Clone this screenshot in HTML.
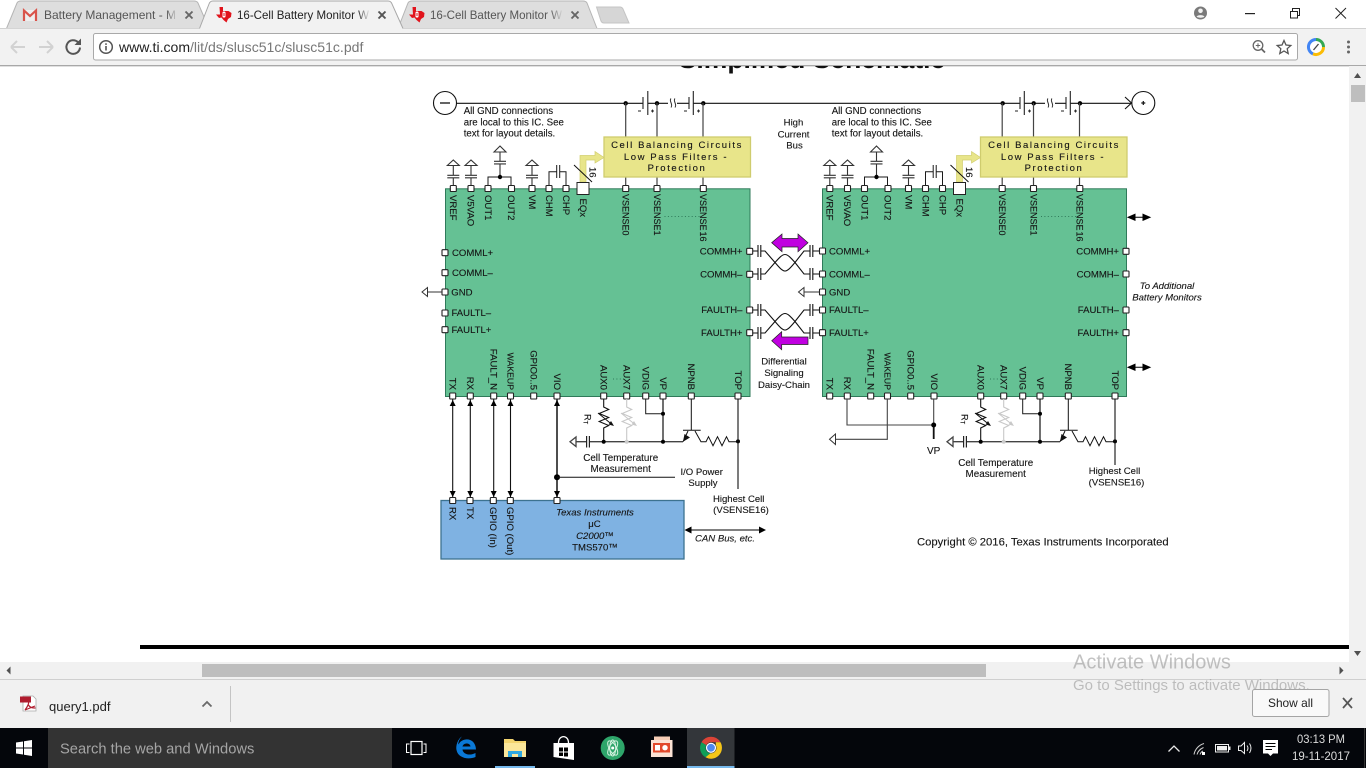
<!DOCTYPE html>
<html lang="en"><head><meta charset="utf-8"><title>16-Cell Battery Monitor</title>
<style>
html,body{margin:0;padding:0;width:1366px;height:768px;overflow:hidden;background:#fff}
svg{display:block;font-family:"Liberation Sans",Arial,sans-serif}
.d text{font-size:9.55px;fill:#151515;stroke:#151515;stroke-width:.12}
.d text.n{font-size:9.7px}
.d text.t{font-size:9.9px}
.d text.v{font-size:9px}
.d text.w{font-size:8.7px}
.s{fill:none;stroke:#1a1a1a;stroke-width:1}
.d text.y{font-size:9.5px;letter-spacing:1.6px;text-anchor:middle}
.m{text-anchor:middle}
.e{text-anchor:end}
</style></head><body>
<svg width="1366" height="768" viewBox="0 0 1366 768" xmlns="http://www.w3.org/2000/svg">
<defs>
<linearGradient id="fa" x1="0" x2="1" y1="0" y2="0"><stop offset="0" stop-color="#dedede" stop-opacity="0"/><stop offset="1" stop-color="#dedede"/></linearGradient>
<linearGradient id="fb" x1="0" x2="1" y1="0" y2="0"><stop offset="0" stop-color="#f2f2f2" stop-opacity="0"/><stop offset="1" stop-color="#f2f2f2"/></linearGradient>
<rect id="p" x="-3" y="-3" width="6" height="6" rx=".8" fill="#fff" stroke="#222" stroke-width="1.1"/>
<circle id="dot" r="2.2" fill="#000"/>
<path id="gnd" d="M-6 165.500L0 160L6 165.500ZM0 165.500V175M-6 175.300H6M-6 177.800H6M0 178V188" fill="#fff" stroke="#333" stroke-width="1.100"/>
<path id="tu" d="M0 0l-3 6h6z" fill="#000"/>
<path id="td" d="M0 0l-3 -6h6z" fill="#000"/>
<path id="da" d="M0 0l7 -3v6zM22 0l-7 -3v6zM6 0H16" fill="#000" stroke="#000" stroke-width="1"/>
<g id="top">
 <use href="#gnd" x="453.300"/><use href="#gnd" x="471"/><use href="#gnd" x="532"/>
 <path d="M494 152L500 146L506 152ZM500 152V161M494 161.300H506M494 163.900H506M500 164V177" fill="#fff" stroke="#333" stroke-width="1.100"/>
 <path d="M488 188V177H511V188" class="s"/><use href="#dot" x="500" y="177"/>
 <path d="M549 188V171.700H556.500M559.700 171.700H566V188M556.700 165V178M559.700 165V178" class="s"/>
 <path d="M580 182V155.500H595V151.500L604 157.500L595 163V160H586V182Z" fill="#e8e58a" stroke="#d2cf70" stroke-width=".7"/>
 <path d="M574 165L592 182" stroke="#111" stroke-width="1"/>
 <rect x="577" y="182.500" width="12" height="12" fill="#fff" stroke="#222"/>
 <path d="M625.700 103V137M625.700 177V188M657 103V137M657 177V188M703 103V137M703 177V188" stroke="#444" stroke-width="1.200"/>
 <rect x="604" y="137" width="146.500" height="40" fill="#e8e58a" stroke="#cfcc6e" stroke-width="1.300"/>
 <use href="#p" x="453.300" y="188.500"/><use href="#p" x="471" y="188.500"/><use href="#p" x="488" y="188.500"/><use href="#p" x="511.500" y="188.500"/><use href="#p" x="532" y="188.500"/><use href="#p" x="549" y="188.500"/><use href="#p" x="566" y="188.500"/><use href="#p" x="625.700" y="188.500"/><use href="#p" x="657" y="188.500"/><use href="#p" x="703.300" y="188.500"/>
 <path d="M664.500 216.500H700" stroke="#2f7a5a" stroke-dasharray="1 2.400"/>
</g>
<g id="bot">
 <use href="#p" x="452.700" y="396"/><use href="#p" x="470.300" y="396"/><use href="#p" x="493.700" y="396"/><use href="#p" x="510.500" y="396"/><use href="#p" x="533.700" y="396"/><use href="#p" x="557" y="396"/><use href="#p" x="603.700" y="396"/><use href="#p" x="626.700" y="396"/><use href="#p" x="645.700" y="396"/><use href="#p" x="663" y="396"/><use href="#p" x="691.300" y="396"/><use href="#p" x="738" y="396"/>
 <path d="M613 379H624" stroke="#2f7a5a" stroke-dasharray="1 2.400"/>
</g>
<g id="temp">
 <path d="M570 441.700L576 437V446.500ZM576 441.700H586.500M589.500 441.700H683" fill="#fff" stroke="#444" stroke-width="1.300"/>
 <path d="M586.600 436V447.500M589.400 436V447.500" stroke="#222" stroke-width="1.200"/>
 <path d="M603.700 399V407l5 2.500-9.500 4 9.500 4-9.500 4 9.500 4-5 2.500V441.700" fill="none" stroke="#111" stroke-width="1.100"/>
 <path d="M598 413L612 424.500" stroke="#111"/><path d="M614 426L608.500 424.500L611 421Z" fill="#111"/>
 <path d="M626.700 399V407l5 2.500-9.500 4 9.500 4-9.500 4 9.500 4-5 2.500V441.700" fill="none" stroke="#c8c8c8" stroke-width="1.100"/>
 <path d="M621 413L635 424.500" stroke="#c8c8c8"/><path d="M637 426L631.500 424.500L634 421Z" fill="#c8c8c8"/>
 <path d="M645.700 399V413.700H663" class="s"/>
 <path d="M663 399V441.700" stroke="#111" stroke-width="1.200"/>
 <circle cx="663" cy="413.700" r="2" fill="#000"/>
 <circle cx="603.700" cy="441.700" r="2" fill="#000"/><circle cx="626.700" cy="441.700" r="2" fill="#ccc"/><circle cx="663" cy="441.700" r="2" fill="#000"/>
 <path d="M691.300 399V430.300M683 430.300H700.700" stroke="#111" stroke-width="1"/>
 <path d="M688 431L683 441.700M695 431L701 441.700H706l2.500-5 4.500 9 4.500-9 4.500 9 4.500-9 2.500 5H738" fill="none" stroke="#111"/>
 <path d="M683 441.700L690 437.500L684.500 434Z" fill="#111"/>
 <circle cx="738" cy="441.400" r="2" fill="#000"/>
</g>
<g id="diff">
 <path d="M753 0H758M758 -6V6M760.800 -6V6M760.800 0H765L775 11.500C779 16 782 20 785 20C788 20 791 16 795 11.500L804 0H810M810 -6V6M812.800 -6V6M812.800 0H819.500" fill="none" stroke="#111" stroke-width="1.100"/>
 <path d="M753 23H758M758 17V29M760.800 17V29M760.800 23H765L775 11.500C779 7 782 3.500 785 3.500C788 3.500 791 7 795 11.500L804 23H810M810 17V29M812.800 17V29M812.800 23H819.500" fill="none" stroke="#111" stroke-width="1.100"/>
</g>
</defs>

<rect width="1366" height="768" fill="#fff"/>
<text x="812" y="68" text-anchor="middle" font-size="26.500" font-weight="700" fill="#111">Simplified Schematic</text>

<g class="d">
<!-- bus -->
<path d="M456.500 103.300H643M648 103.300H668M677 103.300H689M693.500 103.300H1020M1024.500 103.300H1045M1055 103.300H1066M1070.500 103.300H1131" stroke="#111" stroke-width="1.200"/>
<circle cx="445" cy="103" r="11.500" fill="#fff" stroke="#111" stroke-width="1.100"/><path d="M440 103H450" stroke="#111" stroke-width="1.300"/>
<circle cx="1143.300" cy="103" r="11.500" fill="#fff" stroke="#111" stroke-width="1.100"/><path d="M1141.300 103H1145.300M1143.300 101V105" stroke="#111" stroke-width="1.200"/>
<path d="M1125 97L1131.500 103L1125 109" fill="none" stroke="#111" stroke-width="1.100"/>
<path d="M643 97V109M647.800 91V115M689 97V109M693.300 91V115M1020 97V109M1024.300 91V115M1066 97V109M1070.300 91V115" stroke="#222" stroke-width="1.100"/>
<path d="M671 98.500c-2.500 2.500 2.500 5.500 0 9M675 98.500c-2.500 2.500 2.500 5.500 0 9M1048 98.500c-2.500 2.500 2.500 5.500 0 9M1052 98.500c-2.500 2.500 2.500 5.500 0 9" fill="none" stroke="#333" stroke-width="1"/>
<path d="M638 111h3M651 111h3M652.500 109.500v3M684 111h3M697 111h3M698.500 109.500v3M1015 111h3M1028 111h3M1029.500 109.500v3M1061 111h3M1074 111h3M1075.500 109.500v3" stroke="#222" stroke-width=".9"/>
<use href="#dot" x="625.700" y="103.300"/><use href="#dot" x="657" y="103.300"/><use href="#dot" x="703.300" y="103.300"/>
<use href="#dot" x="1002.700" y="103.300"/><use href="#dot" x="1033.700" y="103.300"/><use href="#dot" x="1080" y="103.300"/>

<!-- chips -->
<rect x="445.500" y="188.800" width="304.500" height="207.700" fill="#65c194" stroke="#2f7a5a" stroke-width="1"/>
<rect x="822.500" y="188.800" width="304" height="207.700" fill="#65c194" stroke="#2f7a5a" stroke-width="1"/>

<use href="#top"/><use href="#top" x="376.500"/>
<use href="#bot"/><use href="#bot" x="377"/>
<use href="#temp"/><use href="#temp" x="377"/>

<!-- side pins -->
<use href="#p" x="445" y="252.700"/><use href="#p" x="445" y="272.700"/><use href="#p" x="445" y="292"/><use href="#p" x="445" y="313"/><use href="#p" x="445" y="329.700"/>
<use href="#p" x="749.700" y="251.300"/><use href="#p" x="749.700" y="274.300"/><use href="#p" x="749.700" y="310"/><use href="#p" x="749.700" y="332.700"/>
<use href="#p" x="822.500" y="251"/><use href="#p" x="822.500" y="274"/><use href="#p" x="822.500" y="292"/><use href="#p" x="822.500" y="310"/><use href="#p" x="822.500" y="332.700"/>
<use href="#p" x="1126" y="251.300"/><use href="#p" x="1126" y="274"/><use href="#p" x="1126" y="310"/><use href="#p" x="1126" y="332.700"/>
<path d="M422 292L427.500 287.500V296.500ZM427.500 292H442" fill="#fff" stroke="#333"/>
<path d="M798.500 292L804 287.500V296.500ZM804 292H819.500" fill="#fff" stroke="#333"/>
<use href="#diff" y="251"/><use href="#diff" y="310"/>
<use href="#da" x="1128" y="217.300"/><use href="#da" x="1128" y="367.300"/>

<!-- magenta arrows -->
<path d="M771.700 242.700L782 234V238.500H798V234L808 242.700L798 251.700V247H782V251.700Z" fill="#c000e0" stroke="#222" stroke-width=".7"/>
<path d="M771.700 340.700L781.700 331.700V337H808V344.500H781.700V349.700Z" fill="#c000e0" stroke="#222" stroke-width=".7"/>

<!-- left chip bottom connections -->
<path d="M452.700 399V497M470.300 399V497M493.700 399V497M510.500 399V497" stroke="#111" stroke-width="1.100"/>
<path d="M557 399V497" stroke="#222" stroke-width="1.600"/>
<use href="#tu" x="452.700" y="400"/><use href="#tu" x="470.300" y="400"/><use href="#tu" x="493.700" y="400"/><use href="#tu" x="510.500" y="400"/><use href="#tu" x="557" y="400"/>
<use href="#td" x="452.700" y="497"/><use href="#td" x="470.300" y="497"/><use href="#td" x="493.700" y="497"/><use href="#td" x="510.500" y="497"/><use href="#td" x="557" y="497"/>
<circle cx="557" cy="477.300" r="3" fill="#000"/><path d="M557 477.300H675" stroke="#111"/>
<path d="M738 399V489" stroke="#111" stroke-width="1.100"/>

<!-- MCU -->
<rect x="441" y="500.500" width="243" height="58.500" fill="#7fb2e2" stroke="#3c7290" stroke-width="1.300"/>
<use href="#p" x="452.700" y="500.500"/><use href="#p" x="470" y="500.500"/><use href="#p" x="493.300" y="500.500"/><use href="#p" x="510.300" y="500.500"/><use href="#p" x="557" y="500.500"/>
<path d="M690 530H760" stroke="#000"/><path d="M684.500 530l7-3.500v7zM766 530l-7-3.500v7z" fill="#000"/>

<!-- right chip bottom connections -->
<path d="M847 399V425H933.700M887.300 399V439.300H835M933.700 399V425" fill="none" stroke="#444" stroke-width="1.100"/>
<path d="M933.700 425V439" stroke="#111" stroke-width="1.800"/>
<circle cx="933.700" cy="425" r="2.500" fill="#000"/>
<path d="M829.500 439.300L835.500 434V444.500Z" fill="#fff" stroke="#333"/>
<path d="M1115 399V465" stroke="#111" stroke-width="1.100"/>

<!-- text : notes -->
<text class="n" x="463.700" y="114">All GND connections</text><text class="n" x="463.700" y="125.700">are local to this IC. See</text><text class="n" x="463.700" y="136.700">text for layout details.</text>
<text class="n" x="831.700" y="114">All GND connections</text><text class="n" x="831.700" y="125.700">are local to this IC. See</text><text class="n" x="831.700" y="136.700">text for layout details.</text>
<text class="m" x="793.500" y="125.700">High</text><text class="m" x="793.500" y="137.700">Current</text><text class="m" x="794.500" y="148.300">Bus</text>
<text class="y" x="677" y="148">Cell Balancing Circuits</text><text class="y" x="676" y="160">Low Pass Filters -</text><text class="y" x="677" y="171">Protection</text>
<text class="y" x="1054" y="148">Cell Balancing Circuits</text><text class="y" x="1053" y="160">Low Pass Filters -</text><text class="y" x="1054" y="171">Protection</text>
<text transform="translate(589.500,167) rotate(90)">16</text><text transform="translate(966,167) rotate(90)">16</text>

<!-- top labels left -->
<text transform="translate(450,195) rotate(90)">VREF</text>
<text transform="translate(467.500,195) rotate(90)">V5VAO</text>
<text transform="translate(485,195) rotate(90)">OUT1</text>
<text transform="translate(508,195) rotate(90)">OUT2</text>
<text transform="translate(528.800,195) rotate(90)">VM</text>
<text transform="translate(546,195) rotate(90)">CHM</text>
<text transform="translate(563,195) rotate(90)">CHP</text>
<text transform="translate(580,198.500) rotate(90)">EQx</text>
<text class="v" transform="translate(622.700,194) rotate(90)">VSENSE0</text>
<text class="v" transform="translate(654,194) rotate(90)">VSENSE1</text>
<text class="v" word-spacing="-1.500" transform="translate(700,194) rotate(90)">VSENSE 16</text>
<!-- top labels right -->
<text transform="translate(826.500,195) rotate(90)">VREF</text>
<text transform="translate(844,195) rotate(90)">V5VAO</text>
<text transform="translate(861.500,195) rotate(90)">OUT1</text>
<text transform="translate(884.500,195) rotate(90)">OUT2</text>
<text transform="translate(905.300,195) rotate(90)">VM</text>
<text transform="translate(922.500,195) rotate(90)">CHM</text>
<text transform="translate(939.500,195) rotate(90)">CHP</text>
<text transform="translate(956.500,198.500) rotate(90)">EQx</text>
<text class="v" transform="translate(999.200,194) rotate(90)">VSENSE0</text>
<text class="v" transform="translate(1030.500,194) rotate(90)">VSENSE1</text>
<text class="v" word-spacing="-1.500" transform="translate(1076.500,194) rotate(90)">VSENSE 16</text>

<!-- side labels -->
<text x="452" y="256">COMML+</text><text x="452" y="276">COMML–</text><text x="451.300" y="295.500">GND</text><text x="451.500" y="316">FAULTL–</text><text x="451.500" y="333">FAULTL+</text>
<text class="e" x="742.500" y="254.500">COMMH+</text><text class="e" x="742.500" y="277.500">COMMH–</text><text class="e" x="742.500" y="313">FAULTH–</text><text class="e" x="742.500" y="336">FAULTH+</text>
<text x="829" y="254.500">COMML+</text><text x="829" y="277.500">COMML–</text><text x="829" y="295.500">GND</text><text x="829" y="313">FAULTL–</text><text x="829" y="336">FAULTL+</text>
<text class="e" x="1119" y="254.500">COMMH+</text><text class="e" x="1119" y="277.500">COMMH–</text><text class="e" x="1119" y="313">FAULTH–</text><text class="e" x="1119" y="336">FAULTH+</text>

<!-- bottom labels left -->
<text class="e" transform="translate(449.500,390) rotate(90)">TX</text>
<text class="e" transform="translate(467,390) rotate(90)">RX</text>
<text class="e" transform="translate(490.500,390) rotate(90)">FAULT_N</text>
<text class="e w" transform="translate(507.300,390) rotate(90)">WAKEUP</text>
<text class="e" transform="translate(530.500,390) rotate(90)">GPIO0..5</text>
<text class="e" transform="translate(553.800,390) rotate(90)">VIO</text>
<text class="e" transform="translate(600.500,390) rotate(90)">AUX0</text>
<text class="e" transform="translate(623.500,390) rotate(90)">AUX7</text>
<text class="e" transform="translate(642.500,390) rotate(90)">VDIG</text>
<text class="e" transform="translate(659.800,390) rotate(90)">VP</text>
<text class="e" transform="translate(688,390) rotate(90)">NPNB</text>
<text class="e" transform="translate(734.800,390) rotate(90)">TOP</text>
<!-- bottom labels right -->
<text class="e" transform="translate(826.500,390) rotate(90)">TX</text>
<text class="e" transform="translate(844,390) rotate(90)">RX</text>
<text class="e" transform="translate(867.500,390) rotate(90)">FAULT_N</text>
<text class="e w" transform="translate(884.300,390) rotate(90)">WAKEUP</text>
<text class="e" transform="translate(907.500,390) rotate(90)">GPIO0..5</text>
<text class="e" transform="translate(930.800,390) rotate(90)">VIO</text>
<text class="e" transform="translate(977.500,390) rotate(90)">AUX0</text>
<text class="e" transform="translate(1000.500,390) rotate(90)">AUX7</text>
<text class="e" transform="translate(1019.500,390) rotate(90)">VDIG</text>
<text class="e" transform="translate(1036.800,390) rotate(90)">VP</text>
<text class="e" transform="translate(1065,390) rotate(90)">NPNB</text>
<text class="e" transform="translate(1111.800,390) rotate(90)">TOP</text>

<!-- misc labels -->
<text class="m" x="784" y="364.500">Differential</text><text class="m" x="784" y="376">Signaling</text><text class="m" x="784" y="388">Daisy-Chain</text>
<text class="m" x="1167" y="289" font-style="italic">To Additional</text><text class="m" x="1167" y="300.500" font-style="italic">Battery Monitors</text>
<text transform="translate(584.500,414) rotate(90)" style="font-size:9px">R<tspan font-size="6" dy="1">T</tspan></text>
<text transform="translate(961.500,414) rotate(90)" style="font-size:9px">R<tspan font-size="6" dy="1">T</tspan></text>
<text class="m t" x="620.700" y="461">Cell Temperature</text><text class="m t" x="620.700" y="472">Measurement</text>
<text class="m t" x="995.700" y="466">Cell Temperature</text><text class="m t" x="995.700" y="477">Measurement</text>
<text class="m" x="701.700" y="475">I/O Power</text><text class="m" x="703" y="486">Supply</text>
<text class="m" x="738.700" y="502">Highest Cell</text><text class="m" x="741" y="513">(VSENSE16)</text>
<text class="m" x="1114.500" y="474">Highest Cell</text><text class="m" x="1116.500" y="485.500">(VSENSE16)</text>
<text class="m" x="933.700" y="454" style="font-size:10px">VP</text>
<text transform="translate(449.500,507) rotate(90)">RX</text><text transform="translate(466.800,507) rotate(90)">TX</text>
<text transform="translate(490,507) rotate(90)">GPIO (In)</text><text transform="translate(507,507) rotate(90)">GPIO (Out)</text>
<text class="m" x="595" y="515.500" font-style="italic">Texas Instruments</text>
<text class="m" x="594.500" y="527">μC</text><text class="m" x="595" y="539" font-style="italic">C2000™</text><text class="m" x="595" y="550.500">TMS570™</text>
<text class="m" x="725" y="541.700" font-style="italic">CAN Bus, etc.</text>
<text x="917" y="545.500" style="font-size:11.270px">Copyright © 2016, Texas Instruments Incorporated</text>
</g>

<rect x="140" y="645" width="1209" height="4" fill="#000"/>

<!-- vertical scrollbar -->
<rect x="1349" y="66" width="17" height="596" fill="#f1f1f1"/>
<path d="M1354 78L1357.500 73L1361 78Z" fill="#505050"/>
<rect x="1351" y="85" width="14" height="17" fill="#bebebe"/>
<path d="M1354 651L1357.500 656L1361 651Z" fill="#505050"/>
<!-- horizontal scrollbar -->
<rect x="0" y="662" width="1366" height="17" fill="#f1f1f1"/>
<rect x="202" y="664" width="784" height="13" fill="#bebebe"/>
<path d="M10.500 666.500L6.500 670.500L10.500 674.500Z" fill="#505050"/>
<path d="M1339.500 666.500L1343.500 670.500L1339.500 674.500Z" fill="#505050"/>
<rect x="0" y="679" width="1366" height="1" fill="#cfcfcf"/>
<!-- download bar -->
<rect x="0" y="680" width="1366" height="48" fill="#f1f1f1"/>
<path d="M23 696H33L36 699V711H23Z" fill="#fff" stroke="#aaa" stroke-width=".8"/>
<rect x="20" y="696.500" width="11" height="6" fill="#b01c2e"/>
<path d="M25 710C28 706 29 703 28.500 702M28.500 705C30 708 33 708 35.500 708M25 710L35 706" fill="none" stroke="#b01c2e" stroke-width="1.200"/>
<text x="49" y="711" font-size="13" fill="#222">query1.pdf</text>
<path d="M202.500 706.500L207 702L211.500 706.500" fill="none" stroke="#6a6a6a" stroke-width="1.800"/>
<rect x="230" y="686" width="1" height="36" fill="#c4c4c4"/>
<path d="M1343 698L1352 708M1352 698L1343 708" stroke="#555" stroke-width="1.700"/>

<!-- browser chrome -->
<rect x="0" y="0" width="1366" height="29" fill="#fff"/>
<rect x="0" y="28" width="1366" height="38" fill="#f2f2f2"/>
<path d="M0 28.500H1366" stroke="#b0b0b0"/>
<path d="M0 65.500H1366" stroke="#a8a8a8"/>
<rect x="0" y="66" width="1349" height="1" fill="#000" opacity=".12"/>
<path d="M6.500 28.500L17 3Q18 1 21 1H194Q197 1 198 3L209 28.500Z" fill="#dedede" stroke="#b5b5b5"/>
<path d="M398 28.500L408 3Q409 1 412 1H583Q586 1 587 3L597 28.500Z" fill="#dedede" stroke="#b5b5b5"/>
<path d="M596.500 7H620Q622 7 623 9L629 23H604Q602 23 601 21Z" fill="#d6d6d6" stroke="#c4c4c4"/>
<path d="M0 28.500H199.500L209 4Q210 1 213 1H388Q391 1 392 4L403 28.500H1366V29H0Z" fill="#f2f2f2" stroke="none"/>
<path d="M199.500 28.500L209 4Q210 1 213 1H388Q391 1 392 4L403 28.500" fill="none" stroke="#a8a8a8"/>
<!-- gmail -->
<rect x="23" y="10" width="14" height="11" fill="#eee"/>
<path d="M24 21V10.500L30 16L36 10.500V21" fill="none" stroke="#d9534a" stroke-width="2.200"/>
<text x="44" y="19" font-size="12" fill="#555">Battery Management - M</text>
<rect x="166" y="6" width="12" height="18" fill="url(#fa)"/>
<path d="M185.500 11.500L192.500 18.500M192.500 11.500L185.500 18.500" stroke="#666" stroke-width="1.900"/>
<!-- TI icons -->
<g id="ti"><path d="M219.500 7H223V11H228.500L231.500 13L231 17L228 19L226.500 22.500L223.500 20L221.500 17.500L219 18L216 14.500H220Z" fill="#e1141c"/><rect x="222.500" y="11.500" width="3" height="6" rx="1.300" fill="#fff"/><rect x="223.500" y="13" width="1" height="3" fill="#e1141c"/></g>
<use href="#ti" x="193"/>
<text x="237" y="19" font-size="12" fill="#222" textLength="132" lengthAdjust="spacingAndGlyphs">16-Cell Battery Monitor W</text>
<rect x="357" y="6" width="13" height="18" fill="url(#fb)"/><rect x="369" y="6" width="6" height="18" fill="#f2f2f2"/>
<path d="M378.500 11.500L385.500 18.500M385.500 11.500L378.500 18.500" stroke="#555" stroke-width="1.900"/>
<text x="430" y="19" font-size="12" fill="#555" textLength="132" lengthAdjust="spacingAndGlyphs">16-Cell Battery Monitor W</text>
<rect x="550" y="6" width="13" height="18" fill="url(#fa)"/><rect x="562" y="6" width="6" height="18" fill="#dedede"/>
<path d="M571.500 11.500L578.500 18.500M578.500 11.500L571.500 18.500" stroke="#666" stroke-width="1.900"/>
<!-- window buttons -->
<circle cx="1200.500" cy="13" r="6.500" fill="#7a7a7a"/><circle cx="1200.500" cy="10.800" r="2.300" fill="#f2f2f2"/><path d="M1196.500 16.800C1197.500 14.500 1203.500 14.500 1204.500 16.800C1203 18 1198 18 1196.500 16.800Z" fill="#f2f2f2"/>
<rect x="1245" y="13" width="10" height="1.200" fill="#222"/>
<path d="M1290.500 11.500H1297.500V18H1290.500ZM1292.500 11V8.500H1299.500V15.500H1297.500" fill="none" stroke="#222" stroke-width="1"/>
<path d="M1335.500 8L1346 18.500M1346 8L1335.500 18.500" stroke="#222" stroke-width="1"/>
<!-- nav -->
<path d="M11 47H25M11 47L17 41M11 47L17 53" fill="none" stroke="#d2d2d2" stroke-width="2"/>
<path d="M39 47H53M53 47L47 41M53 47L47 53" fill="none" stroke="#d2d2d2" stroke-width="2"/>
<path d="M80 47.500A6.800 6.800 0 1 1 78 42.200" fill="none" stroke="#555" stroke-width="2"/><path d="M81 38.500V45H74.500Z" fill="#555"/>
<rect x="93.500" y="33.500" width="1204" height="26.500" rx="2" fill="#fff" stroke="#a9a9a9"/>
<circle cx="106" cy="47" r="6.300" fill="none" stroke="#555" stroke-width="1.500"/><rect x="105.200" y="46" width="1.600" height="4.500" fill="#555"/><rect x="105.200" y="43.300" width="1.600" height="1.600" fill="#555"/>
<text x="119" y="52" font-size="14.050" fill="#777"><tspan fill="#222">www.ti.com</tspan>/lit/ds/slusc51c/slusc51c.pdf</text>
<circle cx="1258" cy="45.500" r="4.800" fill="none" stroke="#666" stroke-width="1.300"/><path d="M1261.500 49L1265 52.500" stroke="#666" stroke-width="1.800"/><path d="M1255.800 45.500H1260.200M1258 43.300V47.700" stroke="#666"/>
<path d="M1284 40.500L1286 45L1290.800 45.500L1287.200 48.700L1288.200 53.500L1284 51L1279.800 53.500L1280.800 48.700L1277.200 45.500L1282 45Z" fill="none" stroke="#555" stroke-width="1.300"/>
<circle cx="1316" cy="47" r="6" fill="#fff"/>
<path d="M1316 39.500A7.500 7.500 0 0 0 1313 53.900" fill="none" stroke="#4285f4" stroke-width="3"/>
<path d="M1313 53.900A7.500 7.500 0 0 0 1323.500 47" fill="none" stroke="#fbbc05" stroke-width="3"/>
<path d="M1323.500 47A7.500 7.500 0 0 0 1316 39.500" fill="none" stroke="#34a853" stroke-width="3"/>
<path d="M1313.500 50L1318.500 44" stroke="#444" stroke-width="1.300"/>
<circle cx="1348.500" cy="42" r="1.500" fill="#666"/><circle cx="1348.500" cy="47" r="1.500" fill="#666"/><circle cx="1348.500" cy="52" r="1.500" fill="#666"/>

<!-- taskbar -->
<rect x="0" y="728" width="1366" height="40" fill="#04060b"/>
<path d="M16 742.500L23 741.500V747.500H16ZM24 741.300L32 740V747.500H24ZM16 748.500H23V754.500L16 753.500ZM24 748.500H32V756L24 754.700Z" fill="#fff"/>
<rect x="48" y="728" width="344" height="40" fill="#333"/>
<text x="60" y="753.500" font-size="14.700" fill="#a5a5a5">Search the web and Windows</text>
<rect x="411" y="741.500" width="11" height="13" fill="none" stroke="#fff" stroke-width="1.200"/>
<path d="M409.500 744H406.500V752.500H409.500M423.500 744H426V752.500H423.500" fill="none" stroke="#fff"/>
<!-- edge -->
<path d="M476 749.500H462.500C463 754.500 470 756 475.500 753V757C468 760 458 758 456.500 750C455.500 744 459 738 462 736.500C458.500 740 458 743.500 458.500 744.500C462 737 475.500 737 476 749.500ZM462.500 746.500H470.500C470 742.500 463.500 742.500 462.500 746.500Z" fill="#0a78d7" fill-rule="evenodd"/>
<!-- explorer -->
<path d="M504 739H513L515 741H526V757H504Z" fill="#f3d46f"/><path d="M504 743H526V757H504Z" fill="#fbe69a"/><path d="M508 757V751H522V757H518V754H512V757Z" fill="#2fa8e0"/>
<rect x="495" y="766" width="40" height="2" fill="#76b9ed"/>
<!-- store -->
<path d="M553.500 743H574V760L553.500 757Z" fill="#fff"/><path d="M558.500 743C558.500 734.500 568.500 734.500 568.500 743" fill="none" stroke="#fff" stroke-width="1.300"/>
<path d="M559 747.500H563V751.500H559ZM564 747.500H568V751.500H564ZM559 752.500H563V756H559ZM564 752.500H568V756.500H564Z" fill="#000"/>
<!-- atom -->
<circle cx="612.700" cy="748" r="12" fill="#2ea56a"/>
<ellipse cx="612.700" cy="748" rx="8" ry="3.500" fill="none" stroke="#d6f2e0" transform="rotate(60 612.700 748)"/><ellipse cx="612.700" cy="748" rx="8" ry="3.500" fill="none" stroke="#d6f2e0" transform="rotate(120 612.700 748)"/><ellipse cx="612.700" cy="748" rx="3" ry="8" fill="none" stroke="#d6f2e0"/><circle cx="612.700" cy="748" r="1.500" fill="#fff"/>
<!-- ppt -->
<path d="M654 736.500H670V750H654Z" fill="#f6cdb6"/><path d="M651 740H672.500V757H651Z" fill="#fbe2d4"/><rect x="653" y="743" width="17" height="9.500" fill="#e2492b"/><circle cx="665" cy="747.700" r="2.700" fill="#fff"/><rect x="655" y="745" width="5" height="5.500" fill="#fff"/>
<!-- chrome -->
<rect x="687" y="728" width="47.500" height="40" fill="#33363a"/>
<rect x="687" y="766" width="47.500" height="2" fill="#76b9ed"/>
<g transform="translate(711,747.800)">
<path d="M0-11A11 11 0 0 1 9.500-5.500H0A5.500 5.500 0 0 0-4.800-2.700L-9.500-5.500A11 11 0 0 1 0-11Z" fill="#db4437"/>
<path d="M-9.500-5.500L-4.800-2.700A5.500 5.500 0 0 0 0 5.500L-5.500 9.500A11 11 0 0 1-9.500-5.500Z" fill="#109d58"/>
<path d="M9.500-5.500A11 11 0 0 1-5.500 9.500L-.5 5.500A5.500 5.500 0 0 0 4.800-2.700V-5.500Z" fill="#f5c518"/>
<circle r="4.500" fill="#4f88ef" stroke="#fff" stroke-width="1.200"/></g>
<!-- tray -->
<path d="M1168.500 751.500L1174 746L1179.500 751.500" fill="none" stroke="#e8e8e8" stroke-width="1.300"/>
<path d="M1194 754.500C1195 749 1199 745 1204 743.500M1197 754.500C1198 751 1200 749 1203.500 747.500M1200 754.500C1200.500 753 1201 752 1203 751" fill="none" stroke="#cfcfcf" stroke-width="1"/><rect x="1202" y="752" width="3" height="3" fill="#fff"/>
<rect x="1215.500" y="744.500" width="13" height="7.500" fill="none" stroke="#eee" stroke-width="1"/><rect x="1217" y="746" width="10" height="4.500" fill="#eee"/><rect x="1229" y="746.500" width="1.500" height="3.500" fill="#eee"/>
<path d="M1238.500 746H1241L1244.500 742.500V753.500L1241 750.500H1238.500Z" fill="none" stroke="#eee"/><path d="M1247 745.500Q1249 748 1247 751M1249.500 743.500Q1252.500 748 1249.500 753" fill="none" stroke="#eee"/>
<path d="M1263 740H1278V753.500H1273L1270.500 756L1268 753.500H1263Z" fill="#fff"/><path d="M1265.500 743.500H1275.500M1265.500 746.500H1275.500M1265.500 749.500H1272" stroke="#000" stroke-width="1"/>
<text x="1321" y="743" text-anchor="middle" font-size="12" fill="#dcdcdc" textLength="48" lengthAdjust="spacingAndGlyphs">03:13 PM</text>
<text x="1321" y="760" text-anchor="middle" font-size="12" fill="#dcdcdc" textLength="58" lengthAdjust="spacingAndGlyphs">19-11-2017</text>
<rect x="1364" y="728" width="1" height="40" fill="#333"/>

<!-- activate watermark -->
<text x="1073" y="668.500" font-size="20" fill="#9a9a9a" opacity=".6">Activate Windows</text>
<text x="1073" y="690" font-size="15" fill="#9a9a9a" opacity=".6">Go to Settings to activate Windows.</text>
<rect x="1252.500" y="689.500" width="76.500" height="27" rx="2" fill="#f9f9f9" stroke="#a5a5a5"/>
<text x="1290.500" y="707" text-anchor="middle" font-size="12" fill="#222" textLength="45" lengthAdjust="spacingAndGlyphs">Show all</text>
</svg>
</body></html>
